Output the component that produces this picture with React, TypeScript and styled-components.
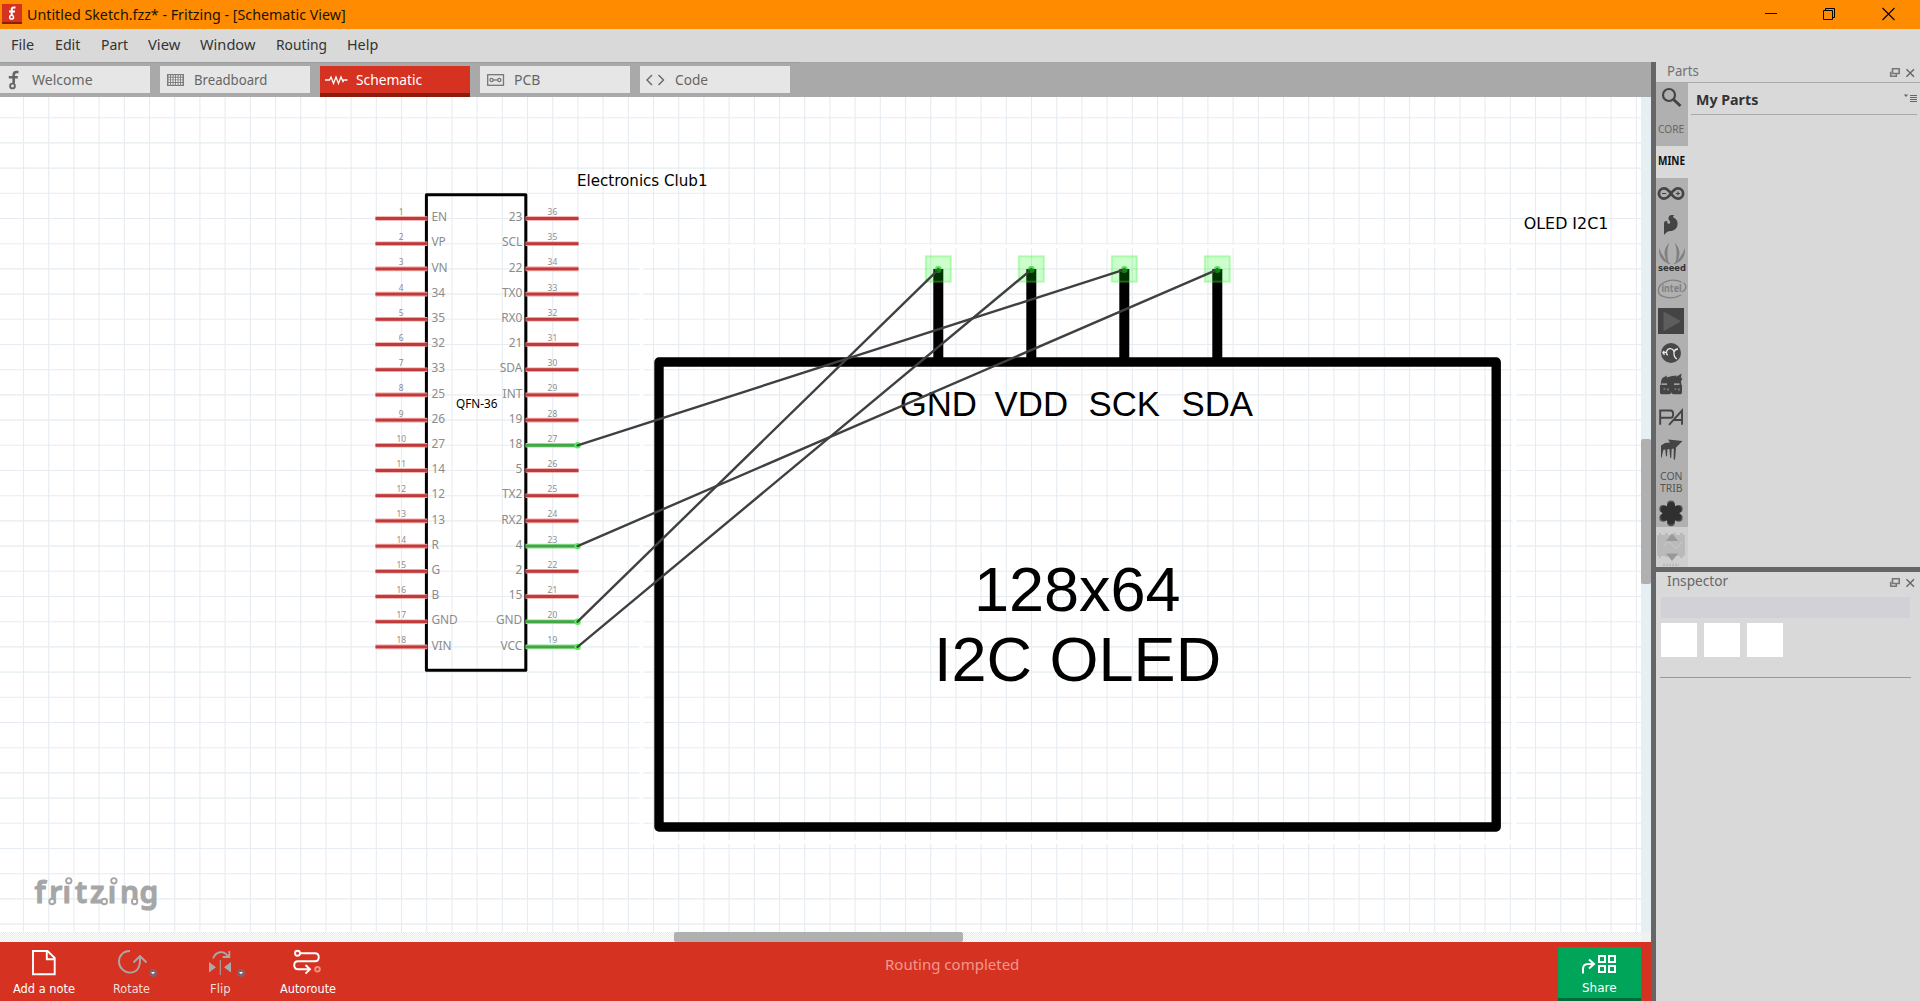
import React, { useLayoutEffect, useRef, useState } from 'react';
import styled, { createGlobalStyle } from 'styled-components';

const UI_FONT = '"Noto Sans", "Open Sans", sans-serif';
const TAHOMA = '"DejaVu Sans", sans-serif';

const Global = createGlobalStyle`
  * { box-sizing: border-box; }
  html, body { margin: 0; background: #d9d9d9; overflow: hidden; }
  body { font-family: ${UI_FONT}; }
  svg { display: block; }
`;

/* ---------- text that fills an exact width ---------- */

const FitBox = styled.span<{ $w: number }>`
  display: block;
  width: ${(p) => p.$w}px;
  flex: none;
  white-space: pre;
  line-height: 0;
`;
const FitInner = styled.span<{ $size: number; $color: string; $weight: number; $font: string }>`
  display: inline-block;
  transform-origin: 0 50%;
  font: ${(p) => p.$weight} ${(p) => p.$size}px/18px ${(p) => p.$font};
  color: ${(p) => p.$color};
`;

type FitProps = { w: number; size?: number; color?: string; weight?: number; font?: string; children: string };

function Fit({ w, size = 15, color = '#333', weight = 400, font = UI_FONT, children }: FitProps) {
  const ref = useRef<HTMLSpanElement>(null);
  const [scale, setScale] = useState(1);
  useLayoutEffect(() => {
    if (ref.current && ref.current.offsetWidth) setScale(w / ref.current.offsetWidth);
  }, [w, children]);
  return (
    <FitBox $w={w}>
      <FitInner ref={ref} $size={size} $color={color} $weight={weight} $font={font} style={{ transform: `scaleX(${scale})` }}>
        {children}
      </FitInner>
    </FitBox>
  );
}

/* ---------- window frame ---------- */

const Window = styled.div`
  width: 1920px;
  height: 1001px;
  display: flex;
  flex-direction: column;
  background: #d9d9d9;
`;
const TitleBar = styled.header`
  height: 29px;
  flex: none;
  background: #ff8c00;
  display: flex;
  align-items: center;
  justify-content: space-between;
  padding: 0 25px 1px 2px;
`;
const TitleLeft = styled.div`
  display: flex;
  align-items: center;
  gap: 5px;
`;
const WindowButtons = styled.div`
  display: flex;
  gap: 46px;
`;
const MenuBar = styled.nav`
  height: 33px;
  flex: none;
  display: flex;
  padding: 6px 0 0 11px;
`;
const MenuItem = styled.div<{ $slot: number }>`
  width: ${(p) => p.$slot}px;
`;
const Body = styled.div`
  flex: 1;
  display: flex;
  min-height: 0;
`;
const Main = styled.main`
  width: 1651px;
  flex: none;
  display: flex;
  flex-direction: column;
`;
const Splitter = styled.div`
  width: 5px;
  flex: none;
  background: #666;
`;

/* ---------- tabs ---------- */

const TabBar = styled.div`
  height: 35px;
  flex: none;
  display: flex;
  gap: 10px;
  padding-top: 4px;
  background: linear-gradient(#9c9c9c, #9c9c9c) 0 0 / 800px 1px no-repeat #a9a9a9;
`;
const Tab = styled.div<{ $active?: boolean; $lead: number }>`
  width: 150px;
  height: ${(p) => (p.$active ? 31 : 27)}px;
  display: flex;
  background: ${(p) => (p.$active ? '#d63222' : '#e6e6e6')};
  border-bottom: ${(p) => (p.$active ? '4px solid #8a1e0c' : 'none')};
  padding: 4px 0 0 ${(p) => p.$lead}px;
`;
const TabIcon = styled.div<{ $slot: number }>`
  width: ${(p) => p.$slot}px;
  flex: none;
`;

/* ---------- canvas ---------- */

const CanvasRow = styled.div`
  display: flex;
  height: 835px;
  flex: none;
`;
const VScroll = styled.div`
  width: 10px;
  background: #e6eff3;
  padding-top: 342px;
`;
const VThumb = styled.div`
  height: 145px;
  border-radius: 2px;
  background: #b0b0b0;
`;
const HScroll = styled.div`
  height: 10px;
  flex: none;
  padding-left: 674px;
  display: flex;
  justify-content: space-between;
  background: repeating-conic-gradient(#e2ecf1 0 25%, #fdfefe 0 50%) 0 0 / 2px 2px;
`;
const HThumb = styled.div`
  width: 289px;
  border-radius: 2px;
  background: #b0b0b0;
`;
const ScrollCorner = styled.div`
  width: 10px;
  background: #f0f0f0;
`;

/* ---------- bottom toolbar ---------- */

const Toolbar = styled.footer`
  flex: 1;
  display: flex;
  background: #d63222;
`;
const Tool = styled.div<{ $slot: number; $pad: number }>`
  width: ${(p) => p.$slot}px;
  flex: none;
  padding-left: ${(p) => p.$pad}px;
  display: flex;
  flex-direction: column;
`;
const ToolArt = styled.div<{ $shift: number }>`
  height: 38px;
  margin-left: ${(p) => p.$shift}px;
`;
const Status = styled.div`
  flex: 1;
  padding: 13px 0 0 533px;
`;
const Share = styled.div`
  width: 83px;
  height: 54px;
  margin: 5px 10px 0 0;
  padding-left: 24px;
  background: #00a55a;
  border-bottom: 3px solid #006c3c;
`;
const ShareArt = styled.div`
  height: 32px;
`;

/* ---------- side panels ---------- */

const Side = styled.aside`
  flex: 1;
  display: flex;
  flex-direction: column;
`;
const PanelHead = styled.div<{ $line?: boolean }>`
  height: 21px;
  flex: none;
  display: flex;
  justify-content: space-between;
  padding: 0 5px 0 11px;
  border-bottom: ${(p) => (p.$line ? '1px solid #a9a9a9' : 'none')};
`;
const HeadIcons = styled.div`
  display: flex;
  gap: 6px;
  padding-top: 6px;
`;
const PartsBody = styled.div`
  height: 484px;
  flex: none;
  display: flex;
`;
const Bins = styled.div`
  width: 32px;
  flex: none;
`;
const Bin = styled.div<{ $h?: number; $bg?: string }>`
  width: 32px;
  height: ${(p) => p.$h ?? 32}px;
  overflow: hidden;
  background: ${(p) => p.$bg ?? '#b0b0b0'};
`;
const BinLabel = styled.div<{ $top: number }>`
  padding: ${(p) => p.$top}px 0 0 2px;
`;
const BinContents = styled.div`
  flex: 1;
  padding: 0 3px;
`;
const BinTitle = styled.div`
  height: 32px;
  display: flex;
  justify-content: space-between;
  align-items: flex-start;
  padding: 8px 0 0 5px;
  border-bottom: 1px solid #a9a9a9;
`;
const HSplit = styled.div`
  height: 5px;
  flex: none;
  background: #666;
`;
const InspectorBody = styled.div`
  padding: 4px 9px 0 4px;
`;
const NameStrip = styled.div`
  height: 21px;
  margin: 0 1px;
  background: #d2d1d7;
`;
const Thumbs = styled.div`
  display: flex;
  gap: 7px;
  height: 60px;
  padding: 5px 1px 0;
  border-bottom: 1px solid #999;
`;
const Thumb = styled.div`
  width: 36px;
  height: 34px;
  background: #fff;
`;

/* ---------- schematic data ---------- */

const LEFT = ['EN', 'VP', 'VN', '34', '35', '32', '33', '25', '26', '27', '14', '12', '13', 'R', 'G', 'B', 'GND', 'VIN'];
const RIGHT = ['23', 'SCL', '22', 'TX0', 'RX0', '21', 'SDA', 'INT', '19', '18', '5', 'TX2', 'RX2', '4', '2', '15', 'GND', 'VCC'];
const CONNECTED = [9, 13, 16, 17];
const OLED_PINS: [string, number][] = [['GND', 938], ['VDD', 1031], ['SCK', 1124], ['SDA', 1217]];
const WIRES: [number, number][] = [[9, 1124], [13, 1217], [16, 938], [17, 1031]];
const PITCH = 25.2;
const pinY = (i: number) => 218.5 + i * PITCH;

function PinLine({ x1, x2, y, on }: { x1: number; x2: number; y: number; on?: boolean }) {
  return (
    <g>
      <line x1={x1} x2={x2} y1={y} y2={y} stroke={on ? '#8fe08f' : '#f2a0a0'} strokeWidth="4.6" />
      <line x1={x1} x2={x2} y1={y} y2={y} stroke={on ? '#45a545' : '#bf3a3a'} strokeWidth="2.8" />
    </g>
  );
}

function Schematic() {
  const cols = Array.from({ length: 65 }, (_, i) => 23.5 + i * PITCH);
  const rows = Array.from({ length: 33 }, (_, i) => 117.7 + i * PITCH);
  return (
    <svg width="1641" height="835" viewBox="0 97 1641 835">
      <rect x="0" y="97" width="1641" height="835" fill="#fff" />
      <g stroke="#e6ecf1" strokeWidth="1.1">
        {cols.map((x) => <line key={x} x1={x} x2={x} y1="97" y2="932" />)}
        {rows.map((y) => <line key={y} x1="0" x2="1641" y1={y} y2={y} />)}
      </g>
      <rect x="641.4" y="246.5" width="873" height="595.5" fill="none" stroke="#fff" strokeWidth="4" />

      <rect x="426.4" y="194.7" width="99.4" height="475.6" fill="none" stroke="#000" strokeWidth="3" strokeLinejoin="round" />
      <g fontFamily={UI_FONT} fill="#8c8c8c">
        {LEFT.map((name, i) => (
          <g key={`l${i}`}>
            <PinLine x1={375.5} x2={427.3} y={pinY(i)} />
            <text x="401.2" y={pinY(i) - 3.6} fontSize="8.4" textAnchor="middle">{i + 1}</text>
            <text x="431.4" y={pinY(i) + 2.7} fontSize="11.9">{name}</text>
          </g>
        ))}
        {RIGHT.map((name, i) => (
          <g key={`r${i}`}>
            <PinLine x1={525.6} x2={578.5} y={pinY(i)} on={CONNECTED.includes(i)} />
            <text x="552.4" y={pinY(i) - 3.6} fontSize="8.4" textAnchor="middle">{36 - i}</text>
            <text x="522.3" y={pinY(i) + 2.7} fontSize="11.9" textAnchor="end">{name}</text>
          </g>
        ))}
      </g>
      <text x="456" y="408" fontFamily={UI_FONT} fontSize="12" textLength="41.5" lengthAdjust="spacingAndGlyphs">QFN-36</text>
      <text x="577" y="185.6" fontFamily={TAHOMA} fontSize="15.6" textLength="130.5" lengthAdjust="spacingAndGlyphs">Electronics Club1</text>
      <text x="1523.8" y="228.6" fontFamily={TAHOMA} fontSize="15.6" textLength="84.5" lengthAdjust="spacingAndGlyphs">OLED I2C1</text>

      <rect x="659" y="362" width="837.2" height="465" fill="none" stroke="#000" strokeWidth="9.4" strokeLinejoin="round" />
      <g fontFamily='"Liberation Sans", Arial, sans-serif' textAnchor="middle">
        {OLED_PINS.map(([name, x]) => (
          <g key={name}>
            <line x1={x + 0.3} x2={x + 0.3} y1="269" y2="360" stroke="#000" strokeWidth="10" />
            <text x={x + 0.3} y="415.7" fontSize="34.8">{name}</text>
          </g>
        ))}
        <text x="1077.3" y="611.4" fontSize="63">128x64</text>
        <text x="1077.6" y="680.6" fontSize="63">I2C OLED</text>
      </g>
      {OLED_PINS.map(([name, x]) => (
        <g key={name}>
          <rect x={x - 12.2} y="256.3" width="25" height="25.4" fill="#00ff00" fillOpacity="0.2" stroke="#4df04d" strokeOpacity="0.35" strokeWidth="2" />
          <circle cx={x + 0.3} cy="269.5" r="3.4" fill="#1fbf1f" fillOpacity="0.6" />
        </g>
      ))}
      {WIRES.map(([i, x]) => (
        <g key={i}>
          <circle cx="577.6" cy={pinY(i)} r="3.2" fill="#55f055" />
          <line x1="577.6" y1={pinY(i)} x2={x + 0.3} y2="269.6" stroke="#404040" strokeWidth="2.4" strokeLinecap="round" />
        </g>
      ))}
      {OLED_PINS.map(([name, x]) => <circle key={name} cx={x + 0.3} cy="269.8" r="1.8" fill="#0c8a0c" />)}

      <g fill="#a6a6a6">
        <text x="34.5 49.3 62.6 75 90 107.8 120 139.600" y="903" fontFamily={UI_FONT} fontSize="30" fontWeight="600" stroke="#a6a6a6" strokeWidth="1" strokeLinejoin="round">fritzing</text>
        <rect x="64" y="877" width="10" height="8.5" fill="#fff" />
        <rect x="109" y="877" width="10" height="8.5" fill="#fff" />
      </g>
      <g fill="#fff" stroke="#a6a6a6" strokeWidth="1.9">
        <circle cx="68.8" cy="880.8" r="2.7" />
        <circle cx="113.9" cy="880.8" r="2.7" />
        <circle cx="52" cy="901.5" r="2.7" />
        <circle cx="104.3" cy="901.5" r="2.7" />
        <circle cx="134.6" cy="901.5" r="2.7" />
      </g>
    </svg>
  );
}

/* ---------- icons ---------- */

const AppIcon = () => (
  <svg width="20" height="20">
    <rect width="20" height="20" fill="#d63222" />
    <rect y="18" width="20" height="2" fill="#8a1e0c" />
    <g fill="none" stroke="#fff" strokeWidth="2">
      <path d="M13.5 3.6h-1.6c-1.5 0-2.2.8-2.2 2.3v5M7 7.6h6" />
      <circle cx="9.6" cy="13.2" r="1.9" strokeWidth="1.5" />
    </g>
  </svg>
);
const WelcomeIcon = () => (
  <svg width="14" height="20">
    <g fill="none" stroke="#666" strokeWidth="2.6">
      <path d="M10.500 2H8.600C6.600 2 5.700 3 5.700 5v8.500M.8 7.200h9" />
      <circle cx="4.500" cy="16" r="2.400" strokeWidth="1.900" />
    </g>
  </svg>
);
const BreadboardIcon = () => (
  <svg width="18" height="20">
    <rect x="0" y="4" width="17" height="12" fill="#7d7d7d" />
    <path d="M1.500 6h14M1.500 8.600h14M1.500 11.200h14M1.500 13.800h14" stroke="#f0f0f0" strokeWidth="1.700" strokeDasharray="1.600 .9" />
  </svg>
);
const SchematicIcon = () => (
  <svg width="24" height="20">
    <path d="M0 10h4.500l1.500-3 2.500 6.500L11 7l2.500 6.500L16 7l2 4.500.8-1.500H22.500" fill="none" stroke="#fff" strokeWidth="1.300" />
  </svg>
);
const PcbIcon = () => (
  <svg width="18" height="20">
    <g fill="none" stroke="#777" strokeWidth="1.300">
      <rect x=".7" y="4.700" width="15.800" height="10.600" />
      <circle cx="4.600" cy="10" r="1.600" /><circle cx="12.300" cy="10" r="1.600" />
      <path d="M6.200 10h4.500" />
    </g>
  </svg>
);
const CodeIcon = () => (
  <svg width="20" height="20">
    <path d="M7 5L2 10l5 5M13.500 5l5 5-5 5" fill="none" stroke="#666" strokeWidth="1.400" />
  </svg>
);
const NoteIcon = () => (
  <svg width="26" height="38">
    <path d="M2 9h14.500L23.700 16v16.200H2z" fill="none" stroke="#fff" strokeWidth="1.900" />
    <path d="M15.800 9v8.200h7.800" fill="none" stroke="#fff" strokeWidth="1.900" />
  </svg>
);
const Drop = () => (
  <g>
    <circle cx="36" cy="31" r="4" fill="#85606a" />
    <path d="M34 30h4l-2 2.200z" fill="#fff" />
  </g>
);
const RotateIcon = () => (
  <svg width="42" height="38">
    <g fill="none" stroke="#a9a9a9" strokeWidth="1.900">
      <path d="M13 9C6 9 2 13.800 2 19.500S6.500 30.600 13 30.600 23 25.600 23 18v-3.500" />
      <path d="M16.500 20.500L23 14l6.500 6.500" />
    </g>
    <Drop />
  </svg>
);
const FlipIcon = () => (
  <svg width="42" height="38">
    <path d="M4 20v10.400l7-5.200zM26 20v10.400l-7-5.200z" fill="#a9a9a9" />
    <path d="M15.300 18v15" stroke="#a9a9a9" strokeWidth="1" />
    <path d="M8 16.500C11 9 19 8 23 14.500M24.300 9v6h-6.600" fill="none" stroke="#a9a9a9" strokeWidth="1.800" />
    <Drop />
  </svg>
);
const AutorouteIcon = () => (
  <svg width="30" height="38">
    <g fill="none" stroke="#fff" strokeWidth="1.900">
      <circle cx="4.500" cy="11.300" r="2.500" />
      <path d="M7 11.300h15c5 0 5 8 0 8H5c-5 0-5 8 0 8h12M12.500 23l4.500 4.300-4.500 4.300" />
      <circle cx="24.500" cy="27.300" r="2.300" stroke="#f0907f" />
    </g>
  </svg>
);
const ShareIcon = () => (
  <svg width="36" height="32">
    <g fill="none" stroke="#fff" strokeWidth="2">
      <path d="M1 26.500V22c0-3 2-5 5-5h6M7 12.500l5 4.500-5 4.500" />
      <path d="M17 9h6v6h-6zM27 9h6v6h-6zM17 19h6v6h-6zM27 19h6v6h-6z" />
    </g>
  </svg>
);
const FloatIcon = () => (
  <svg width="11" height="10">
    <g fill="none" stroke="#777" strokeWidth="1.600">
      <path d="M3.500 .8h6.700v4.700H3.500z" /><path d="M1.700 3.800v4.500h5.600V6" />
    </g>
  </svg>
);
const CloseSmall = () => (
  <svg width="9" height="10"><path d="M.4 1.200l7.600 7.600M8 1.200L.4 8.800" stroke="#666" strokeWidth="1.500" /></svg>
);
const BinMenuIcon = () => (
  <svg width="14" height="14">
    <path d="M.7 3.500h4.600L3 6z" fill="#666" />
    <path d="M7 4.500h7M7 6.500h7M7 8.500h7M7 10.500h7" stroke="#666" strokeWidth="1" />
  </svg>
);
const SearchIcon = () => (
  <svg width="32" height="31">
    <circle cx="13" cy="12" r="6" fill="none" stroke="#444" strokeWidth="2.200" />
    <path d="M17.500 16.500l7 6.500" stroke="#444" strokeWidth="3" />
  </svg>
);
const ArduinoIcon = () => (
  <svg width="32" height="32">
    <g fill="none" stroke="#444" strokeWidth="2.700">
      <path d="M15 15.500C12.500 12 10.500 10.400 8 10.400a5.100 5.100 0 0 0 0 10.200c2.500 0 4.500-1.600 7-5.100s4.500-5.100 7-5.100a5.100 5.100 0 0 1 0 10.200c-2.500 0-4.500-1.600-7-5.100z" />
      <path d="M6 15.500h4.200M19.800 15.500H24M21.900 13.400v4.200" strokeWidth="1.100" />
    </g>
  </svg>
);
const SparkIcon = () => (
  <svg width="32" height="32">
    <path d="M8 25V13.500c0-2.300 2-3 3.500-2-.7 1.300.2 2.500 1.600 2.200 1.500-.5 1.300-2.200.2-3.200-1.600-1.700-1-5 2.200-5.500 1.500-.3 2.500 0 3 .5-1.800.4-1.700 1.800-.6 2.300 3 1.300 4.100 4 3.600 7.200-.6 3.600-3.500 6-7 6-2.800 0-4 1.500-6.500 4z" fill="#444" />
  </svg>
);
const SeeedIcon = () => (
  <svg width="32" height="32">
    <g fill="#808080">
      <path d="M13.500.5C7 6.500 7 14.500 13 22c-2-7-2.500-14 .5-21.500zM18.500.5C25 6.500 25 14.500 19 22c2-7 2.500-14-.5-21.500z" />
      <path d="M3 6c-1 8 4 15 12 16.300C9 18 5.500 12.500 3 6zM29 6c1 8-4 15-12 16.300C23 18 26.500 12.500 29 6z" />
    </g>
    <text x="2" y="29" fontFamily={TAHOMA} fontSize="8.500" fontWeight="700" fill="#333" textLength="28" lengthAdjust="spacingAndGlyphs">seeed</text>
  </svg>
);
const IntelIcon = () => (
  <svg width="32" height="32">
    <path d="M25.500 8.200C16 3.500 3 8 2.300 16.300c-.4 6.700 12 10.200 23 4.700M27.500 8.700c4.500 3.600 1.500 8.300-1.500 9.100" fill="none" stroke="#808080" strokeWidth="1.300" />
    <text x="5.500" y="18.300" fontFamily={UI_FONT} fontSize="10.500" fontWeight="700" fill="#808080" textLength="20" lengthAdjust="spacingAndGlyphs">intel</text>
  </svg>
);
const PicaxeIcon = () => (
  <svg width="32" height="32"><rect x="2" y="2" width="26" height="26" fill="#444" /><path d="M7.500 5.500l17.500 9.800-17.500 10z" fill="#5d5d5d" /></svg>
);
const SnootIcon = () => (
  <svg width="32" height="32">
    <circle cx="15" cy="15" r="10" fill="#484848" />
    <path d="M6.500 14.500h4c0-5.500 8-5 7.500.5-.2 3.500 1 5 3 6M10.500 14.500c0 2 .6 2.400 1.300 2.600M18 14c.5-2 2-3 4-3M8.300 13l-1.500 1.500L8.500 17" fill="none" stroke="#e8e8e8" strokeWidth="1.300" />
  </svg>
);
const HairIcon = () => (
  <svg width="32" height="32">
    <path d="M5 15c-.5-4 .5-7 3-8l3-1.500-.5 2L16 6l5-.5-1 1.500 5.500-3.500-.5 4.500 1.500.5-1.500 3 .5 3.500z" fill="#444" />
    <path d="M4 15h22v7.500c0 1-.8 1.800-2 1.800h-6c-1.500 0-2.700-1-2.700-2.300 0 1.300-1 2.300-2.500 2.300H6c-1.200 0-2-.8-2-1.800z" fill="#444" />
    <path d="M5.500 14.200h5.500M18 14.200h5.500" stroke="#c0c0c0" strokeWidth="1.200" />
    <path d="M7.500 19h2M12 18.500v2M18.500 19h2M23 18.500v2" stroke="#999" strokeWidth="1.200" />
  </svg>
);
const PaIcon = () => (
  <svg width="32" height="32">
    <path d="M4.200 22.800V8.500h10.300c3.600 0 3.600 7.300 0 7.300H4.200M13 22.800L26 8.500v14.300M17.500 18H26" fill="none" stroke="#444" strokeWidth="1.900" />
  </svg>
);
const ElephantIcon = () => (
  <svg width="32" height="32">
    <path d="M5 24V11.500l4-2.500 5-.5-2-3 14.500 1.500-6.500 6.500-1 12.500-1.300-1V14.500l-2 .5-.5 9h-1l-.8-9-2 .3-.4 7h-1l-.8-7-2 1-1.500 7z" fill="#444" />
  </svg>
);
const FlowerIcon = () => (
  <svg width="32" height="29">
    <g fill="#555">
      {[0, 60, 120, 180, 240, 300].map((a) => (
        <circle key={a} cx={15 + 9 * Math.sin((a * Math.PI) / 180)} cy={15.300 - 9 * Math.cos((a * Math.PI) / 180)} r="3.900" />
      ))}
    </g>
    <g fill="#303030">
      {[0, 60, 120, 180, 240, 300].map((a) => (
        <circle key={a} cx={15 + 7.500 * Math.sin((a * Math.PI) / 180)} cy={15.300 - 7.500 * Math.cos((a * Math.PI) / 180)} r="3.800" />
      ))}
      <circle cx="15" cy="15.300" r="8.500" />
    </g>
  </svg>
);
const ScrollBinIcon = () => (
  <svg width="32" height="40">
    <path d="M1 8h2V6h2v2h4V6h3v2h5V6h3v2h4V6h3v2h2v21h-2v2h-3v-2h-4v1h-3v-1h-5v1H9v-1H5v2H3v-2H1z" fill="#bababa" />
    <path d="M8 19c4-8 7-2 9 0s4 4 8-3" fill="none" stroke="#cdcdcd" strokeWidth="1" />
    <path d="M10 14l6-7.500 6 7.500zM10 26.500l6 7.500 6-7.500z" fill="#999" />
    <path d="M7 38h16" stroke="#bbb" strokeWidth="2.500" strokeDasharray="2 1" />
  </svg>
);

const MENU: [string, number, number][] = [
  ['File', 23, 43.5], ['Edit', 25.500, 46.500], ['Part', 27, 47], ['View', 32.500, 52], ['Window', 55.500, 75.500], ['Routing', 50.500, 71], ['Help', 31.500, 60],
];

export default function App() {
  return (
    <Window>
      <Global />
      <TitleBar>
        <TitleLeft>
          <AppIcon />
          <Fit w={318.500} size={15} color="#1a1200">Untitled Sketch.fzz* - Fritzing - [Schematic View]</Fit>
        </TitleLeft>
        <WindowButtons>
          <svg width="12" height="14"><path d="M0 6.500h12" stroke="#000" /></svg>
          <svg width="13" height="14"><path d="M.5 3.500h9v9h-9zM2.500 3.500v-2h9v9h-2" fill="none" stroke="#000" /></svg>
          <svg width="13" height="14"><path d="M.5 1l12 12M12.500 1L.5 13" stroke="#000" strokeWidth="1.100" /></svg>
        </WindowButtons>
      </TitleBar>
      <MenuBar>
        {MENU.map(([label, w, slot]) => (
          <MenuItem key={label} $slot={slot}><Fit w={w}>{label}</Fit></MenuItem>
        ))}
      </MenuBar>
      <Body>
        <Main>
          <TabBar>
            <Tab $lead={8}><TabIcon $slot={23.500}><WelcomeIcon /></TabIcon><Fit w={61} size={14.500} color="#666">Welcome</Fit></Tab>
            <Tab $lead={7}><TabIcon $slot={27}><BreadboardIcon /></TabIcon><Fit w={73.500} size={14.500} color="#666">Breadboard</Fit></Tab>
            <Tab $active $lead={5}><TabIcon $slot={30.500}><SchematicIcon /></TabIcon><Fit w={66.500} size={14.500} color="#fff">Schematic</Fit></Tab>
            <Tab $lead={7}><TabIcon $slot={26.500}><PcbIcon /></TabIcon><Fit w={26} size={14.500} color="#666">PCB</Fit></Tab>
            <Tab $lead={5}><TabIcon $slot={29.500}><CodeIcon /></TabIcon><Fit w={33} size={14.500} color="#666">Code</Fit></Tab>
          </TabBar>
          <CanvasRow>
            <Schematic />
            <VScroll><VThumb /></VScroll>
          </CanvasRow>
          <HScroll><HThumb /><ScrollCorner /></HScroll>
          <Toolbar>
            <Tool $slot={100} $pad={13}><ToolArt $shift={18}><NoteIcon /></ToolArt><Fit w={62} size={12.500} color="#fff" font={TAHOMA}>Add a note</Fit></Tool>
            <Tool $slot={100} $pad={13}><ToolArt $shift={4}><RotateIcon /></ToolArt><Fit w={37} size={12.500} color="#f3dcd8" font={TAHOMA}>Rotate</Fit></Tool>
            <Tool $slot={80} $pad={10}><ToolArt $shift={-5}><FlipIcon /></ToolArt><Fit w={20.500} size={12.500} color="#f3dcd8" font={TAHOMA}>Flip</Fit></Tool>
            <Tool $slot={72} $pad={0}><ToolArt $shift={13}><AutorouteIcon /></ToolArt><Fit w={56} size={12.500} color="#fff" font={TAHOMA}>Autoroute</Fit></Tool>
            <Status><Fit w={134} size={15} color="#f0998c">Routing completed</Fit></Status>
            <Share><ShareArt><ShareIcon /></ShareArt><Fit w={34.500} size={12.500} color="#fff" font={TAHOMA}>Share</Fit></Share>
          </Toolbar>
        </Main>
        <Splitter />
        <Side>
          <PanelHead $line>
            <Fit w={32} size={14} color="#707070">Parts</Fit>
            <HeadIcons><FloatIcon /><CloseSmall /></HeadIcons>
          </PanelHead>
          <PartsBody>
            <Bins>
              <Bin $h={31}><SearchIcon /></Bin>
              <Bin><BinLabel $top={6}><Fit w={26.500} size={11.500} color="#666">CORE</Fit></BinLabel></Bin>
              <Bin $bg="#d9d9d9"><BinLabel $top={6}><Fit w={27} size={11.500} weight={700} color="#111">MINE</Fit></BinLabel></Bin>
              <Bin><ArduinoIcon /></Bin>
              <Bin><SparkIcon /></Bin>
              <Bin><SeeedIcon /></Bin>
              <Bin><IntelIcon /></Bin>
              <Bin><PicaxeIcon /></Bin>
              <Bin><SnootIcon /></Bin>
              <Bin><HairIcon /></Bin>
              <Bin><PaIcon /></Bin>
              <Bin><ElephantIcon /></Bin>
              <Bin>
                <svg width="32" height="32">
                  <g fontFamily={UI_FONT} fontSize="11" fill="#555">
                    <text x="4" y="13.500" textLength="22.500" lengthAdjust="spacingAndGlyphs">CON</text>
                    <text x="4" y="25.500" textLength="22.500" lengthAdjust="spacingAndGlyphs">TRIB</text>
                  </g>
                </svg>
              </Bin>
              <Bin $h={29}><FlowerIcon /></Bin>
              <Bin $h={40} $bg="#cfcfcf"><ScrollBinIcon /></Bin>
            </Bins>
            <BinContents>
              <BinTitle><Fit w={62} size={14} weight={700} color="#333">My Parts</Fit><BinMenuIcon /></BinTitle>
            </BinContents>
          </PartsBody>
          <HSplit />
          <PanelHead>
            <Fit w={61.500} size={14} color="#666">Inspector</Fit>
            <HeadIcons><FloatIcon /><CloseSmall /></HeadIcons>
          </PanelHead>
          <InspectorBody>
            <NameStrip />
            <Thumbs><Thumb /><Thumb /><Thumb /></Thumbs>
          </InspectorBody>
        </Side>
      </Body>
    </Window>
  );
}
